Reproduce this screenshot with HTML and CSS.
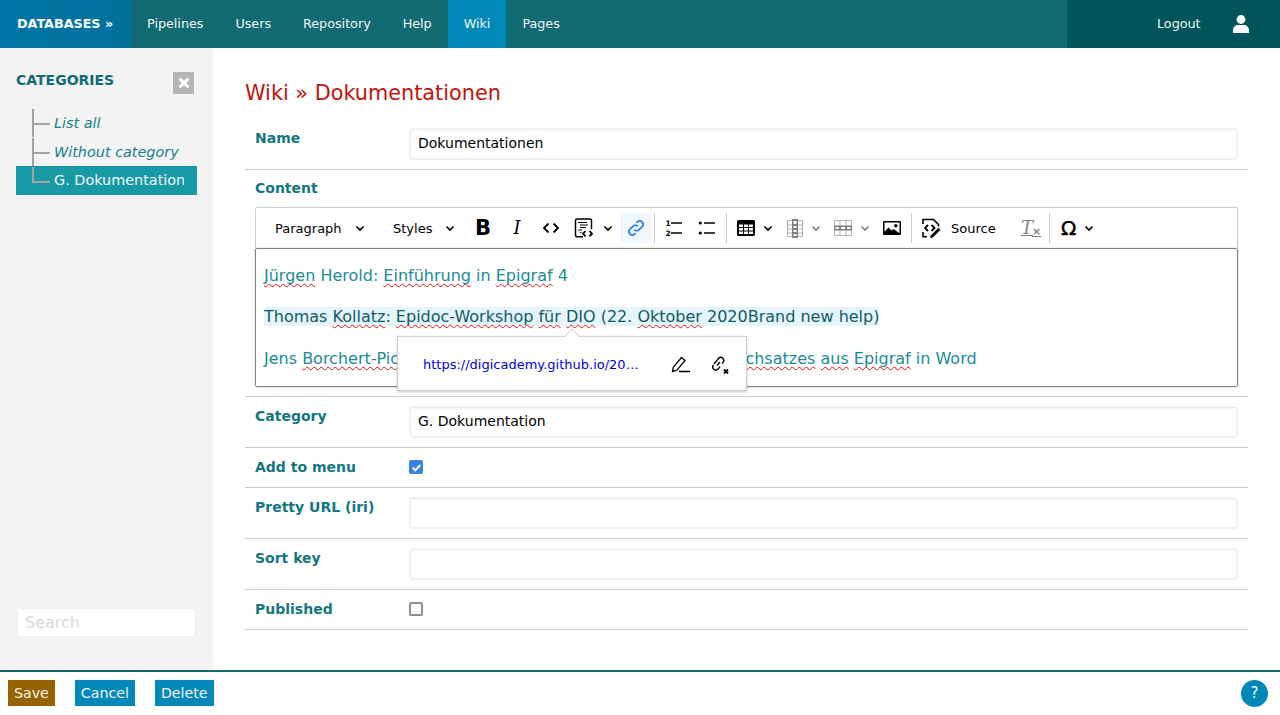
FILE: index.html
```html
<!DOCTYPE html>
<html lang="en">
<head>
  <meta charset="UTF-8" />
  <title>Wiki » Dokumentationen</title>
  <link rel="stylesheet" href="styles.css">
</head>
<body>
  <header class="topbar">
    <a class="brand">DATABASES »</a>
    <nav class="nav">
      <a>Pipelines</a>
      <a>Users</a>
      <a>Repository</a>
      <a>Help</a>
      <a class="active">Wiki</a>
      <a>Pages</a>
    </nav>
    <div class="account">
      <a>Logout</a>
      <svg class="user" width="16" height="18" viewBox="0 0 16 18"><circle cx="8" cy="4.500" r="4.400"/><path d="M0 18v-2.500C0 12 2.500 10 5 10h6c2.500 0 5 2 5 5.500V18z"/></svg>
    </div>
  </header>

  <div class="middle">
    <aside class="sidebar">
      <div class="side-head">
        <h3>CATEGORIES</h3>
        <span class="close">
          <svg width="12" height="12" viewBox="0 0 12 12"><path d="M1.500 1.500l9 9M10.500 1.500l-9 9"/></svg>
        </span>
      </div>
      <ul class="tree">
        <li><i>List all</i></li>
        <li><i>Without category</i></li>
        <li class="current"><span>G. Dokumentation</span></li>
      </ul>
      <input class="search" placeholder="Search" />
    </aside>

    <main class="content">
      <h1>Wiki » Dokumentationen</h1>

      <div class="row">
        <label>Name</label>
        <input class="field" value="Dokumentationen" />
      </div>

      <div class="row stacked">
        <label>Content</label>
        <div class="editor">
          <div class="toolbar">
            <span class="drop para">Paragraph <svg class="chev" viewBox="0 0 10 10"><path d="M1.500 3.500L5 7l3.500-3.500"/></svg></span>
            <span class="drop styles">Styles <svg class="chev" viewBox="0 0 10 10"><path d="M1.500 3.500L5 7l3.500-3.500"/></svg></span>
            <span class="btn glyph bold">B</span>
            <span class="btn glyph ital">I</span>
            <span class="btn"><svg class="ico line" viewBox="0 0 20 20"><path d="M7.500 5.500L3 10l4.500 4.500M12.500 5.500L17 10l-4.500 4.500"/></svg></span>
            <span class="btn wide code">
              <svg class="ico" viewBox="0 0 20 20"><path class="frame" d="M9 18.800H3a1.500 1.500 0 0 1-1.500-1.500V2.500A1.500 1.500 0 0 1 3 1h13a1.500 1.500 0 0 1 1.500 1.500V11"/><path class="thin" d="M4 4.500h9M6 7h8M6 9.500h6M4 12h4M6 14.500h1.500"/><path class="line" d="M11.500 13L9 15.700l2.500 2.700M15.500 13l2.500 2.700-2.500 2.700"/></svg>
              <svg class="chev" viewBox="0 0 10 10"><path d="M1.500 3.500L5 7l3.500-3.500"/></svg>
            </span>
            <span class="btn on"><svg class="ico link" viewBox="0 0 20 20"><path d="M8.300 11.700a3.400 3.400 0 0 0 4.800 0l3.100-3.100a3.400 3.400 0 0 0-4.800-4.800l-1 1"/><path d="M11.700 8.300a3.400 3.400 0 0 0-4.800 0l-3.100 3.100a3.400 3.400 0 0 0 4.800 4.800l1-1"/></svg></span>
            <span class="sep sep-a"></span>
            <span class="btn"><svg class="ico" viewBox="0 0 20 20"><text class="num" x="2.500" y="7.700">1</text><text class="num" x="2.500" y="17.700">2</text><path class="thin2" d="M8 5h11M8 15h11"/></svg></span>
            <span class="btn"><svg class="ico" viewBox="0 0 20 20"><circle cx="3.300" cy="5" r="1.600"/><circle cx="3.300" cy="15" r="1.600"/><path class="thin2" d="M7 5h11M7 15h11"/></svg></span>
            <span class="sep"></span>
            <span class="btn wide tbl"><svg class="ico" viewBox="0 0 20 20"><path fill-rule="evenodd" d="M2.500 2h15A1.500 1.500 0 0 1 19 3.500v13a1.500 1.500 0 0 1-1.500 1.500h-15A1.500 1.500 0 0 1 1 16.500v-13A1.500 1.500 0 0 1 2.500 2zM3 6.500V9h4V6.500zM8 6.500V9h4V6.500zM13 6.500V9h4V6.500zM3 10v2.500h4V10zM8 10v2.500h4V10zM13 10v2.500h4V10zM3 13.500V16h4v-2.500zM8 13.500V16h4v-2.500zM13 13.500V16h4v-2.500z"/></svg><svg class="chev" viewBox="0 0 10 10"><path d="M1.500 3.500L5 7l3.500-3.500"/></svg></span>
            <span class="btn wide col off"><svg class="ico" viewBox="0 0 20 20"><path class="grid" d="M2.500 2.500h15v16h-15zM2.500 7h15M2.500 11h15M2.500 15h15"/><path fill-rule="evenodd" d="M7 1h6v19H7zM8.500 3v3h3V3zM8.500 8v2h3V8zM8.500 12v2h3v-2zM8.500 16v2.500h3V16z"/></svg><svg class="chev" viewBox="0 0 10 10"><path d="M1.500 3.500L5 7l3.500-3.500"/></svg></span>
            <span class="btn wide rw off"><svg class="ico" viewBox="0 0 20 20"><path class="grid" d="M1.500 2.500h17v15h-17zM7 2.500v15M13 2.500v15"/><path fill-rule="evenodd" d="M1 7.500h18v5H1zM2.500 9v2H6V9zM8 9v2h4V9zM14 9v2h3.500V9z"/></svg><svg class="chev" viewBox="0 0 10 10"><path d="M1.500 3.500L5 7l3.500-3.500"/></svg></span>
            <span class="btn"><svg class="ico" viewBox="0 0 20 20"><path fill-rule="evenodd" d="M2 3h16a1 1 0 0 1 1 1v12a1 1 0 0 1-1 1H2a1 1 0 0 1-1-1V4a1 1 0 0 1 1-1zm.5 1.500v9.300l4-4.300 3 3 2-1.500 6 4.300V4.500zM13.800 6a1.700 1.700 0 1 1 0 3.400 1.700 1.700 0 0 1 0-3.400z"/></svg></span>
            <span class="sep"></span>
            <span class="btn src">
              <svg class="ico" viewBox="0 0 20 20"><path class="thin2" d="M6 18.800H2V14M2 6V1.500h10.500l5 5v2"/><path class="line" d="M7 7L4 10l3 3M10.500 7l3 3-3 3"/><path d="M17.500 9.800l2 2-7.500 7.500-3 1 1-3z"/></svg>
              <span>Source</span>
            </span>
            <span class="btn glyph clear off">T<small>×</small></span>
            <span class="sep"></span>
            <span class="btn wide glyph omega">Ω<svg class="chev" viewBox="0 0 10 10"><path d="M1.500 3.500L5 7l3.500-3.500"/></svg></span>
          </div>

          <div class="body">
            <p><a><span class="sp">Jürgen</span> Herold: <span class="sp">Einführung</span> in <span class="sp">Epigraf</span> 4</a></p>
            <p><a class="sel">Thomas <span class="sp">Kollatz</span>: <span class="sp">Epidoc-Workshop</span> <span class="sp">für</span> <span class="sp">DIO</span> (22. <span class="sp">Oktober</span> 2020Brand new help)</a></p>
            <p><a>Jens <span class="sp">Borchert-Pichler</span>: Zur Erstellung&nbsp; eines druckfertigen <span class="sp">Buchsatzes</span> <span class="sp">aus</span> <span class="sp">Epigraf</span> in Word</a></p>
            <div class="balloon">
              <a class="url">https://digicademy.github.io/20…</a>
              <svg class="ico" viewBox="0 0 20 20"><path class="pen" d="M1.500 17.500l.8-4.300L10.500 3.500l3.500 3-8.200 9.800zM8 17.500h11"/></svg>
              <svg class="ico" viewBox="0 0 20 20"><path class="pen" d="M8.500 4.500a3 3 0 0 1 4.500 4l-1 1.200M4 10l4.500-5.500M3.500 11a3 3 0 0 0 4.500 4l2-2.300M7 11.500L10 8"/><path class="line" d="M14 15.500l4 4M18 15.500l-4 4"/></svg>
            </div>
          </div>
        </div>
      </div>

      <div class="row">
        <label>Category</label>
        <input class="field" value="G. Dokumentation" />
      </div>

      <div class="row check-row">
        <label>Add to menu</label>
        <span class="box checked"><svg width="13" height="13" viewBox="0 0 13 13"><path d="M2.800 6.800l2.600 2.600 4.800-5.400"/></svg></span>
      </div>

      <div class="row">
        <label>Pretty URL (iri)</label>
        <input class="field" />
      </div>

      <div class="row">
        <label>Sort key</label>
        <input class="field" />
      </div>

      <div class="row check-row">
        <label>Published</label>
        <span class="box"></span>
      </div>
    </main>
  </div>

  <footer class="footer">
    <button class="save">Save</button>
    <button>Cancel</button>
    <button>Delete</button>
    <span class="help">?</span>
  </footer>
</body>
</html>
```

FILE: styles.css
```css
:root {
  --teal: #126b73;
  --teal-dark: #00555b;
  --label: #14767f;
  --blue: #0088b8;
  --line: #cccccc;
}

* {
  box-sizing: border-box;
}

html, body {
  height: 100%;
}

body {
  margin: 0;
  display: flex;
  flex-direction: column;
  font-family: "DejaVu Sans", sans-serif;
  font-size: 14px;
  color: #000;
  background: #fff;
  overflow: hidden;
}

/* top bar */
.topbar {
  display: flex;
  height: 48px;
  flex: none;
  background: var(--teal);
  color: #f0f5f5;
  font-size: 12.720px;
  line-height: 48px;
}

.brand {
  width: 131px;
  padding-left: 17px;
  background: linear-gradient(90deg, #0077a6, #00709a);
  color: #fff;
  font-weight: bold;
}

.nav {
  display: flex;
  flex: 1;
}

.nav a {
  padding: 0 16px;
}

.nav a.active {
  background: var(--blue);
}

.account {
  width: 213px;
  display: flex;
  align-items: center;
  padding-left: 90px;
  background: var(--teal-dark);
}

.user {
  margin-left: 32px;
  fill: #fff;
}

/* middle area */
.middle {
  flex: 1;
  display: flex;
  min-height: 0;
}

.sidebar {
  width: 213px;
  flex: none;
  display: flex;
  flex-direction: column;
  padding: 24px 16px 33px;
  background: #f3f3f3;
}

.side-head {
  display: flex;
  justify-content: space-between;
  padding-right: 3px;
  height: 36px;
}

.side-head h3 {
  margin: 0;
  font-size: 14px;
  line-height: 17px;
  color: var(--teal);
}

.close {
  width: 21px;
  height: 22px;
  display: flex;
  align-items: center;
  justify-content: center;
  background: #b4b4b4;
}

.close path {
  stroke: #fff;
  stroke-width: 3;
  fill: none;
}

.tree {
  list-style: none;
  margin: 0;
  padding: 0;
  flex: 1;
  font-size: 14.400px;
  color: #178089;
}

.tree li {
  position: relative;
  height: 29px;
  line-height: 31px;
  padding-left: 38px;
  white-space: nowrap;
  overflow: hidden;
}

.tree li::before {
  content: "";
  position: absolute;
  left: 16px;
  top: 1px;
  width: 16px;
  height: 14px;
  border-left: 2px solid #a3a3a3;
  border-bottom: 2px solid #a3a3a3;
}

.tree li:not(.current)::after {
  content: "";
  position: absolute;
  left: 16px;
  top: 15px;
  height: 15px;
  border-left: 2px solid #a3a3a3;
}

.tree li.current {
  width: 181px;
  padding-right: 13px;
  line-height: 29px;
  background: #1899a6;
  color: #f0f8f8;
}

.tree li.current span {
  display: block;
  overflow: hidden;
}

.search {
  width: 179px;
  height: 29px;
  margin-left: 1px;
  padding: 0 7px;
  border: 1px solid #eeeeee;
  border-radius: 3px;
  background: #fff;
  font: 16px "DejaVu Sans", sans-serif;
}

.search::placeholder {
  color: #d8d8d8;
}

/* form */
.content {
  flex: 1;
  padding: 30px 32px 0;
  min-width: 0;
}

h1 {
  margin: 0 0 20px;
  font-size: 20.800px;
  font-weight: normal;
  line-height: 30px;
  color: #c0140c;
}

.row {
  display: flex;
  padding-bottom: 9px;
  margin-bottom: 9px;
  border-bottom: 1px solid var(--line);
}

.row label {
  width: 164px;
  flex: none;
  padding-left: 10px;
  font-weight: bold;
  line-height: 20px;
  color: var(--label);
}

.field {
  width: 829px;
  height: 32px;
  padding: 0 7px 2px;
  border: 2px solid #f0f0f0;
  border-radius: 4px;
  background: #fff;
  box-shadow: inset 0 1px 0 #f6f6f6;
  font: 14px "DejaVu Sans", sans-serif;
  color: #000;
}

.stacked {
  display: block;
}

.stacked label {
  display: block;
  width: auto;
  margin: -1px 0 9px;
}

.check-row {
  height: 31px;
}

.box {
  width: 14px;
  height: 14px;
  margin-top: 3px;
  border: 2px solid #8f8f9d;
  border-radius: 2px;
  background: #fff;
}

.box.checked {
  display: flex;
  align-items: center;
  justify-content: center;
  border: none;
  background: #3b82e6;
}

.box.checked path {
  fill: none;
  stroke: #fff;
  stroke-width: 2;
}

/* editor */
.editor {
  margin-left: 10px;
  width: 983px;
}

.toolbar {
  display: flex;
  align-items: center;
  height: 41px;
  padding-left: 7px;
  border: 1px solid var(--line);
  border-bottom: none;
  border-radius: 2px 2px 0 0;
  font-size: 13px;
  color: #000;
  white-space: nowrap;
}

.drop {
  display: flex;
  align-items: center;
  justify-content: space-between;
  flex: none;
  height: 30px;
}

.para {
  width: 102px;
  padding-left: 12px;
}

.styles {
  width: 90px;
  margin-right: 11px;
  padding-left: 28px;
}

.chev {
  width: 10px;
  height: 10px;
  flex: none;
  fill: none;
  stroke: #000;
  stroke-width: 1.700;
}

.btn {
  display: flex;
  align-items: center;
  justify-content: center;
  flex: none;
  width: 34px;
  height: 30px;
  border-radius: 2px;
}

.btn.wide {
  justify-content: flex-start;
  width: 48px;
  padding-left: 10px;
  gap: 7px;
}

.btn.code {
  width: 51px;
  padding-left: 6px;
  gap: 9px;
}

.btn.tbl {
  padding-left: 9px;
}

.btn.col {
  gap: 6px;
}

.btn.rw {
  width: 52px;
}

.btn.on {
  width: 31px;
  margin-left: 1px;
  background: #f0f7ff;
}

.btn.off {
  opacity: 0.5;
}

.ico {
  width: 20px;
  height: 20px;
  flex: none;
}

.frame, .thin, .thin2, .line, .grid, .pen {
  fill: none;
  stroke: #000;
}

.frame {
  stroke-width: 1.500;
}

.thin {
  stroke-width: 1.100;
}

.thin2 {
  stroke-width: 1.600;
}

.line {
  stroke-width: 1.800;
}

.pen {
  stroke-width: 1.300;
}

.grid {
  stroke-width: 1;
  stroke-opacity: 0.6;
}

.link {
  fill: none;
  stroke: #2c7cf0;
  stroke-width: 1.700;
}

.num {
  font-size: 7.500px;
  font-weight: bold;
}

.glyph {
  line-height: 30px;
}

.bold {
  font-size: 21px;
  font-weight: bold;
}

.ital {
  font-family: "DejaVu Serif", serif;
  font-size: 18px;
  font-style: italic;
}

.src {
  justify-content: flex-start;
  width: 102px;
  padding-left: 9px;
  gap: 10px;
}

.clear {
  font-family: "DejaVu Serif", serif;
  font-size: 18px;
  font-style: italic;
  text-decoration: underline;
  text-decoration-thickness: 1px;
}

.clear small {
  display: inline-block;
  margin: 6px 0 0 -1px;
  font: bold 11px "DejaVu Sans", sans-serif;
}

.btn.omega {
  padding-left: 11px;
  gap: 8px;
  font-size: 20px;
  -webkit-text-stroke: 0.4px #000;
}

.sep {
  width: 1px;
  height: 30px;
  flex: none;
  margin-left: 2px;
  background: #ccc;
}

.sep-a {
  margin: 0 1px 0 3px;
}

.clear + .sep {
  margin-left: 1px;
}

.body {
  position: relative;
  height: 139px;
  padding: 8px;
  border: 1px solid #808080;
  border-radius: 2px;
  box-shadow: 0 0 2px rgba(0, 0, 0, 0.25);
  font-size: 16px;
  line-height: 21px;
  color: #1a8a96;
  white-space: nowrap;
}

.body p {
  margin: 7.800px 0 20.500px;
}

.sel {
  background: #e6f4fb;
  color: #0d5c66;
}

.sp {
  text-decoration: underline wavy #e01010 1px;
  text-underline-offset: 2px;
  text-decoration-skip-ink: none;
}

.balloon {
  position: absolute;
  left: 141px;
  top: 87px;
  display: flex;
  align-items: center;
  gap: 19px;
  width: 350px;
  height: 55px;
  padding: 1px 0 0 25px;
  background: #fff;
  border: 1px solid #d0d0d0;
  box-shadow: 0 1px 3px rgba(0, 0, 0, 0.2);
}

.balloon::before {
  content: "";
  position: absolute;
  left: 168px;
  top: -6px;
  width: 11px;
  height: 11px;
  background: #fff;
  border: 1px solid #d0d0d0;
  border-width: 1px 0 0 1px;
  transform: rotate(45deg);
}

.url {
  width: 229px;
  font-size: 13px;
  color: #0000e0;
}

/* footer */
.footer {
  flex: none;
  display: flex;
  align-items: flex-start;
  gap: 20px;
  height: 45px;
  padding: 8px 12px 0 8px;
  border-top: 2px solid var(--teal);
}

.footer button {
  height: 26px;
  padding: 0 6px;
  border: none;
  background: var(--blue);
  color: #f4f4f4;
  font: 14.200px "DejaVu Sans", sans-serif;
}

.footer button.save {
  background: #966300;
}

.help {
  margin-left: auto;
  width: 27px;
  height: 27px;
  border-radius: 50%;
  background: var(--blue);
  color: #fff;
  text-align: center;
  line-height: 27px;
  font-size: 15px;
}
```
